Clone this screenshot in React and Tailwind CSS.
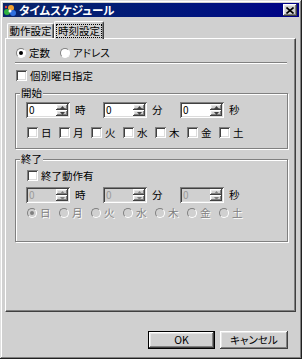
const face = "font-['Noto_Sans_CJK_JP','Noto_Sans',sans-serif] [font-feature-settings:'palt']"
const raised = 'shadow-[inset_-1px_-1px_#404040,inset_1px_1px_#ffffff,inset_-2px_-2px_#808080,inset_2px_2px_#e6e6e6]'
const sunken = 'shadow-[inset_1px_1px_#808080,inset_-1px_-1px_#ffffff,inset_2px_2px_#404040,inset_-2px_-2px_#dcdcdc]'
const grayText = 'text-[#808080] [text-shadow:1px_1px_0_#ffffff]'
const txt = 'text-[10.5px] leading-[12px]'

function Radio({ label, checked, disabled }) {
  return (
    <div className="flex items-center gap-[3px] h-[10px]">
      <span className={`w-[10px] h-[10px] rounded-full flex items-center justify-center border border-t-[#808080] border-l-[#808080] border-b-white border-r-white ${disabled ? 'bg-[#d0d0d0]' : 'bg-white'}`}>
        {checked && <span className={`w-[4px] h-[4px] rounded-full ${disabled ? 'bg-[#808080]' : 'bg-black'}`} />}
      </span>
      <span className={`${txt} ${disabled ? grayText : 'text-black'}`}>{label}</span>
    </div>
  )
}

function Check({ label, className = '' }) {
  return (
    <div className={`flex items-center gap-[3px] h-[11px] ${className}`}>
      <span className={`w-[11px] h-[11px] bg-white ${sunken}`} />
      <span className={`${txt} text-black`}>{label}</span>
    </div>
  )
}

function Arrow({ up, disabled }) {
  return (
    <svg width="5" height="3" viewBox="0 0 5 3">
      <polygon points={up ? '2.5,0 5,3 0,3' : '0,0 5,0 2.5,3'} fill={disabled ? '#808080' : '#404040'} />
    </svg>
  )
}

function Spin({ disabled }) {
  return (
    <div className={`w-[44px] h-[16px] flex p-[2px] ${sunken} ${disabled ? 'bg-[#d0d0d0]' : 'bg-white'}`}>
      <span className={`flex-1 text-[10px] leading-[12px] pl-[1px] ${disabled ? 'text-[#9a9a9a]' : 'text-black'}`}>0</span>
      <div className="w-[12px] flex flex-col">
        <div className={`h-[6px] flex items-center justify-center bg-[#d0d0d0] ${raised}`}><Arrow up disabled={disabled} /></div>
        <div className={`h-[6px] flex items-center justify-center bg-[#d0d0d0] ${raised}`}><Arrow disabled={disabled} /></div>
      </div>
    </div>
  )
}

function TimeRow({ disabled }) {
  return (
    <div className="flex items-center">
      {['時', '分', '秒'].map((u) => (
        <div key={u} className="flex items-center w-[77px]">
          <Spin disabled={disabled} />
          <span className={`ml-[5px] ${txt} text-black`}>{u}</span>
        </div>
      ))}
    </div>
  )
}

const days = ['日', '月', '火', '水', '木', '金', '土']

function Group({ title, className, children }) {
  return (
    <div className={`relative -ml-[1px] w-[273px] border border-[#808080] shadow-[inset_1px_1px_0_#ffffff,1px_1px_0_#ffffff] ${className}`}>
      <span className={`absolute -top-[7px] left-[4px] px-[1px] bg-[#d0d0d0] ${txt} text-black`}>{title}</span>
      {children}
    </div>
  )
}

export default function App() {
  return (
    <div className={`w-[302px] h-[359px] bg-[#d0d0d0] p-[3px] flex flex-col ${face} shadow-[inset_-1px_-1px_#202020,inset_1px_1px_#e0e0e0,inset_-2px_-2px_#808080,inset_2px_2px_#ffffff]`}>
      {/* title bar */}
      <div className="h-[14px] flex items-center pr-[2px] bg-gradient-to-r from-[#0a246a] to-[#000088]">
        <svg width="14" height="13" viewBox="0 0 14 13">
          <circle cx="8" cy="4" r="3" fill="#f0a030" />
          <circle cx="4" cy="8" r="3" fill="#30b040" />
          <circle cx="10" cy="9" r="3" fill="#3070e0" />
          <circle cx="7" cy="7" r="1.5" fill="#ffffff" />
          <circle cx="3" cy="3" r="1.2" fill="#e04040" />
        </svg>
        <span className="ml-[2px] text-[11.5px] leading-[14px] font-bold text-white">タイムスケジュール</span>
        <div className={`ml-auto w-[14px] h-[12px] bg-[#d0d0d0] flex items-center justify-center ${raised}`}>
          <svg width="8" height="7" viewBox="0 0 8 7">
            <path d="M0.5 0.5 L7.5 6.5 M7.5 0.5 L0.5 6.5" stroke="#000" strokeWidth="1.6" />
          </svg>
        </div>
      </div>

      {/* tabs */}
      <div className="pl-[2px] pr-[3px]">
        <div className="mt-[4px] h-[18px] -mb-[1px] pl-[2px] flex items-end relative z-10">
          <div className={`w-[47px] h-[15px] mb-[1px] flex items-center justify-center border-t border-l border-white border-r border-r-[#404040] rounded-t-[2px] shadow-[inset_-1px_0_#808080] ${txt} text-black`}>
            動作設定
          </div>
          <div className="w-[50px] h-[18px] flex items-center justify-center bg-[#d0d0d0] border-t border-l border-white border-r border-r-[#404040] rounded-t-[2px] shadow-[inset_-1px_0_#808080]">
            <span className={`px-[1px] outline outline-1 outline-dotted outline-black ${txt} text-black`}>時刻設定</span>
          </div>
        </div>

        {/* panel */}
        <div className="h-[274px] border border-t-white border-l-white border-r-[#404040] border-b-[#404040] shadow-[inset_-1px_-1px_#808080] pl-[10px]">
          <div className="mt-[9px] flex items-center">
            <Radio label="定数" checked />
            <div className="ml-[10px]"><Radio label="アドレス" /></div>
          </div>

          <div className="mt-[4px] -ml-[1px] w-[272px] h-[2px] border-t border-t-[#808080] border-b border-b-white" />

          <Check className="mt-[6px]" label="個別曜日指定" />

          <Group title="開始" className="mt-[12px] h-[56px] pt-[8px] pl-[10px]">
            <TimeRow />
            <div className="mt-[9px] ml-[1px] flex">
              {days.map((d) => (
                <div key={d} className="w-[32px]"><Check label={d} /></div>
              ))}
            </div>
          </Group>

          <Group title="終了" className="mt-[10px] h-[83px] pt-[10px] pl-[10px]">
            <Check className="ml-[1px]" label="終了動作有" />
            <div className="mt-[6px]"><TimeRow disabled /></div>
            <div className="mt-[5px] ml-[1px] flex">
              {days.map((d, i) => (
                <div key={d} className="w-[32px]"><Radio label={d} checked={i === 0} disabled /></div>
              ))}
            </div>
          </Group>
        </div>
      </div>

      {/* buttons */}
      <div className="mt-[19px] flex justify-end gap-[5px] pr-[11px]">
        <div className="w-[67px] h-[18px] border border-black">
          <div className={`w-full h-full flex items-center justify-center ${txt} text-black ${raised}`}>OK</div>
        </div>
        <div className={`w-[68px] h-[18px] flex items-center justify-center ${txt} text-black ${raised}`}>キャンセル</div>
      </div>
    </div>
  )
}
